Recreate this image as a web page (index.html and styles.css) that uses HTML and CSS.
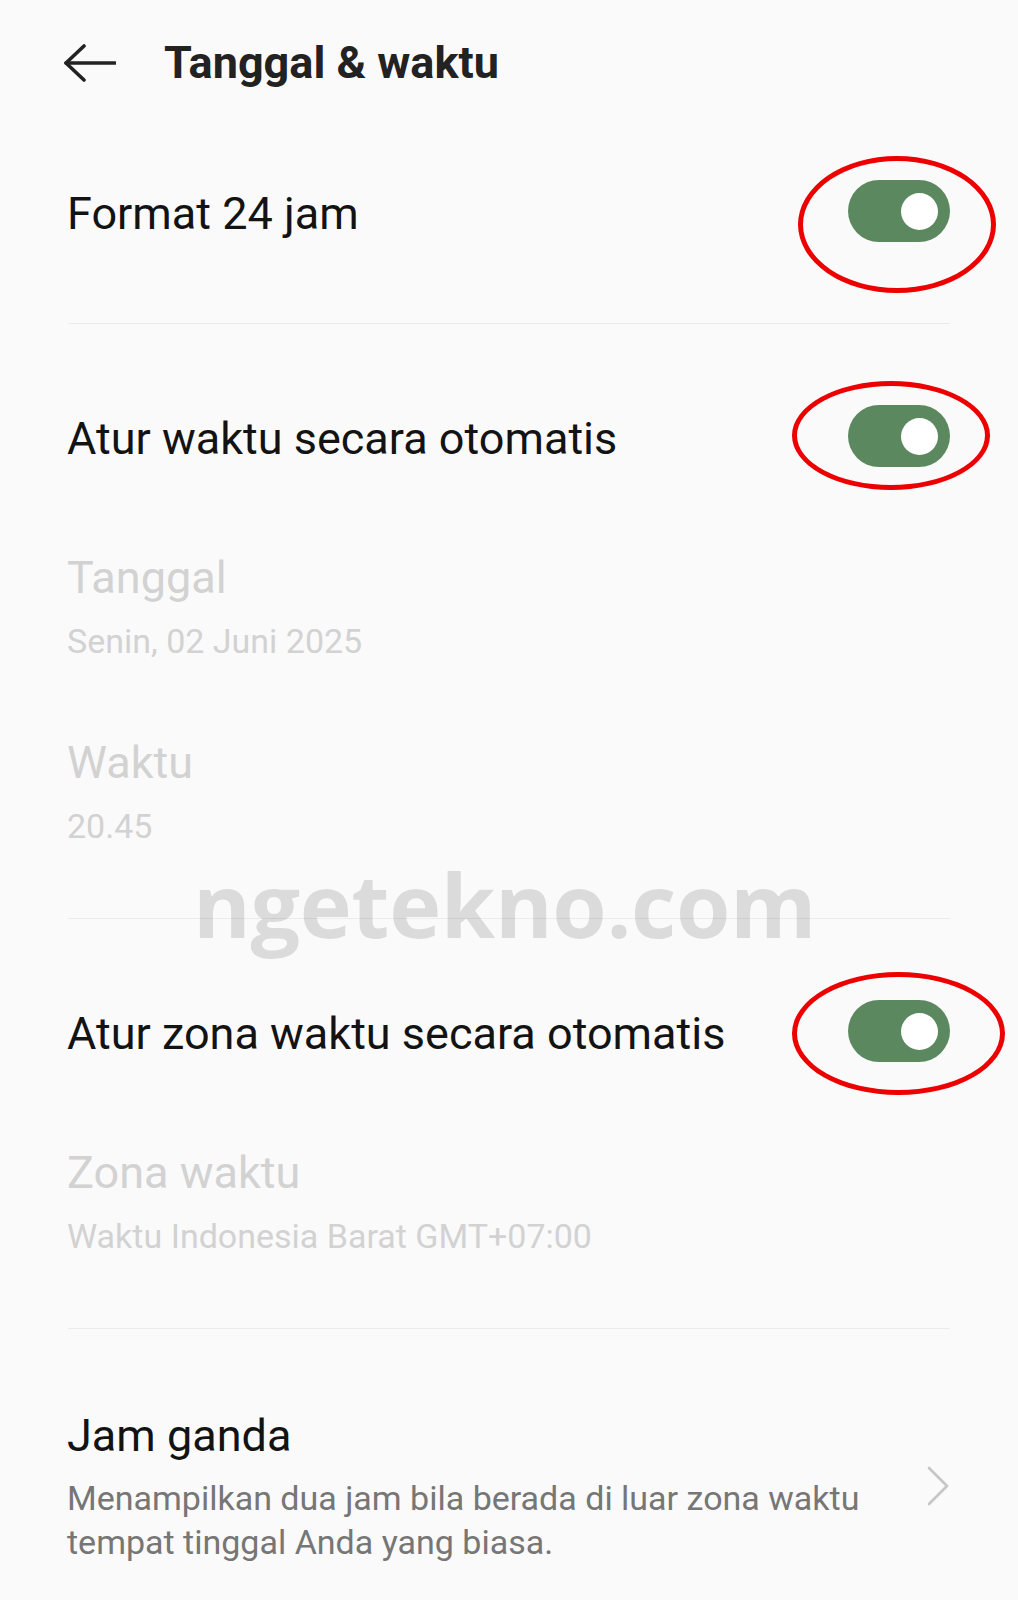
FILE: index.html
```html
<!DOCTYPE html>
<html lang="id">
<head>
    <meta charset="UTF-8">
    <meta name="viewport" content="width=device-width, initial-scale=1.0">
    <title>Tanggal &amp; waktu</title>
    <link rel="stylesheet" href="styles.css">
</head>
<body>
    <div class="screen">
        <header class="topbar">
            <svg class="back" viewBox="0 0 52 40" width="52" height="40">
                <line x1="2" y1="20" x2="51" y2="20"/>
                <polyline points="20,3 2,20 20,37"/>
            </svg>
            <h1 class="title">Tanggal &amp; waktu</h1>
        </header>

        <div class="row switch-row">
            <span class="label">Format 24 jam</span>
            <span class="switch"><span class="knob"></span><span class="mark mark-1"></span></span>
        </div>
        <div class="divider"></div>

        <div class="row switch-row">
            <span class="label">Atur waktu secara otomatis</span>
            <span class="switch"><span class="knob"></span><span class="mark mark-2"></span></span>
        </div>
        <div class="row detail disabled">
            <div class="label">Tanggal</div>
            <div class="sub">Senin, 02 Juni 2025</div>
        </div>
        <div class="row detail disabled">
            <div class="label">Waktu</div>
            <div class="sub">20.45</div>
        </div>
        <div class="divider"></div>

        <div class="row switch-row">
            <span class="label">Atur zona waktu secara otomatis</span>
            <span class="switch"><span class="knob"></span><span class="mark mark-3"></span></span>
        </div>
        <div class="row detail disabled">
            <div class="label">Zona waktu</div>
            <div class="sub">Waktu Indonesia Barat GMT+07:00</div>
        </div>
        <div class="divider"></div>

        <div class="row link-row">
            <div class="text">
                <div class="label">Jam ganda</div>
                <div class="desc">Menampilkan dua jam bila berada di luar zona waktu tempat tinggal Anda yang biasa.</div>
            </div>
            <svg class="chevron" viewBox="0 0 24 40" width="24" height="40">
                <polyline points="3,2 21,20 3,38"/>
            </svg>
        </div>

        <div class="watermark">ngetekno.com</div>
    </div>
</body>
</html>
```

FILE: styles.css
```css
body {
    margin: 0;
    background: #fafafa;
    font-family: 'Roboto', 'Noto Sans', sans-serif;
    color: #131313;
}
.screen {
    position: relative;
    width: 1018px;
    min-height: 1600px;
    overflow: hidden;
}
.topbar {
    display: flex;
    align-items: center;
    height: 46px;
    padding: 40px 0 13px 64px;
}
.back {
    margin-right: 48px;
    fill: none;
    stroke: #222;
    stroke-width: 3.6;
    stroke-linecap: round;
    stroke-linejoin: round;
}
.title {
    margin: 0;
    font-size: 45px;
    line-height: 46px;
    font-weight: bold;
    color: #222;
}
.row {
    padding: 0 68px 0 67px;
}
.label {
    font-size: 45px;
    line-height: 56px;
}
.switch-row {
    display: flex;
    align-items: center;
    justify-content: space-between;
    height: 224px;
}
.switch-row .label {
    padding-top: 5px;
}
.switch {
    position: relative;
    display: flex;
    align-items: center;
    justify-content: flex-end;
    width: 102px;
    height: 62px;
    padding-right: 12px;
    box-sizing: border-box;
    border-radius: 31px;
    background: #5b885e;
}
.knob {
    width: 37px;
    height: 37px;
    border-radius: 50%;
    background: #fff;
}
.mark {
    position: absolute;
    box-sizing: border-box;
    border: 5px solid #ec0000;
    border-radius: 50%;
}
.mark-1 {
    left: -50px;
    top: -24px;
    width: 198px;
    height: 137px;
}
.mark-2 {
    left: -56px;
    top: -24px;
    width: 198px;
    height: 109px;
}
.mark-3 {
    left: -56px;
    top: -28px;
    width: 213px;
    height: 123px;
}
.detail {
    padding-top: 2px;
    padding-bottom: 70px;
}
.sub {
    margin-top: 13px;
    font-size: 34px;
    line-height: 44px;
}
.disabled {
    color: #d2d2d2;
}
.divider {
    height: 1px;
    margin: 0 68px;
    background: #ebebeb;
}
.link-row {
    display: flex;
    align-items: center;
    justify-content: space-between;
    padding-top: 79px;
}
.desc {
    margin-top: 12px;
    font-size: 34px;
    line-height: 44px;
    color: #767676;
}
.chevron {
    flex-shrink: 0;
    margin-left: 40px;
    fill: none;
    stroke: #c6c6c6;
    stroke-width: 2.6;
    stroke-linecap: round;
    stroke-linejoin: round;
}
.watermark {
    position: absolute;
    left: 193px;
    top: 860px;
    font-family: 'Open Sans', sans-serif;
    font-size: 88px;
    line-height: 88px;
    font-weight: bold;
    color: rgba(0, 0, 0, 0.12);
    letter-spacing: -0.4px;
}
```
